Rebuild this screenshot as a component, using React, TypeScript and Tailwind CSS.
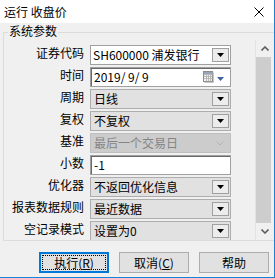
import React from "react";

function DropArrow() {
  return (
    <div className="absolute right-[1px] top-[2px] bottom-[2px] w-[17px] border border-[#a0a0a0] bg-[#ececec] flex items-center justify-center">
      <svg width="7" height="4" viewBox="0 0 7 4">
        <path d="M0 0H7L3.5 4Z" fill="#000" />
      </svg>
    </div>
  );
}

function Label({ children }: { children: React.ReactNode }) {
  return (
    <div className="h-[20px] text-right leading-[15px] whitespace-nowrap">{children}</div>
  );
}

function ReadCombo({ text }: { text: string }) {
  return (
    <div className="relative h-[20px] w-[141px] border border-[#adadad] bg-[#e1e1e1] flex items-center pl-[3px] leading-none whitespace-nowrap">
      {text}
      <DropArrow />
    </div>
  );
}

export default function App() {
  return (
    <div className="w-[275px] h-[278px] bg-[#f0f0f0] border-r border-b border-[#1883d7] flex flex-col font-['Noto_Sans_CJK_SC',sans-serif] text-[12px] text-black overflow-hidden">
      {/* title bar */}
      <div className="h-[23px] shrink-0 bg-white flex items-center justify-between pl-[4px] pr-[10px]">
        <span className="leading-none">运行 收盘价</span>
        <svg width="10" height="10" viewBox="0 0 10 10">
          <path d="M0.5 0.5L9.5 9.5M9.5 0.5L0.5 9.5" stroke="#000" strokeWidth="1" />
        </svg>
      </div>

      {/* group box */}
      <div className="relative mt-[9px] ml-[3px] h-[209px] shrink-0 border-t border-l border-b border-[#dcdcdc] pt-[7px] flex">
        <span className="absolute left-[4px] top-[-9px] bg-[#f0f0f0] px-[1px] leading-[14px]">系统参数</span>

        {/* scroll content */}
        <div className="flex-1 overflow-hidden pt-[5px]">
          <div className="grid grid-cols-[80px_141px] gap-x-[6px] gap-y-[2px]">
            <Label>证券代码</Label>
            <div className="relative h-[20px] w-[141px] border border-[#a0a0a0] bg-white flex items-center pl-[2px] leading-none whitespace-nowrap">
              SH600000 浦发银行
              <DropArrow />
            </div>

            <Label>时间</Label>
            <div className="relative h-[20px] w-[141px] border border-[#a0a0a0] shadow-[inset_1px_1px_0_#696969] bg-white flex items-center pl-[3px] leading-none whitespace-nowrap">
              2019/ 9/ 9
              <div className="absolute right-[6px] top-[3px] flex items-center gap-[3px]">
                <svg width="11" height="12" viewBox="0 0 11 12">
                  <rect x="0.5" y="0.5" width="9" height="10" fill="#f4f4f4" stroke="#8c8c8c" />
                  <path d="M1 3.5H9.5M1 5.5H9.5M1 7.5H9.5M3.5 3V10.5M5.5 3V10.5M7.5 3V10.5" stroke="#b8b8b8" strokeWidth="1" />
                  <rect x="1" y="1" width="8.5" height="2" fill="#9aa6b8" />
                  <path d="M10.5 1.5V11.5H1.5" stroke="#c8c8c8" fill="none" />
                </svg>
                <svg width="7" height="4" viewBox="0 0 7 4" className="mt-[4px]">
                  <path d="M0 0H7L3.5 4Z" fill="#3f63a3" />
                </svg>
              </div>
            </div>

            <Label>周期</Label>
            <ReadCombo text="日线" />

            <Label>复权</Label>
            <ReadCombo text="不复权" />

            <Label>基准</Label>
            <div className="relative h-[20px] w-[141px] border border-[#bfbfbf] bg-[#cccccc] flex items-center pl-[3px] leading-none whitespace-nowrap text-[#858585]">
              最后一个交易日
              <svg width="8" height="5" viewBox="0 0 8 5" className="absolute right-[6px] top-[7px]">
                <path d="M0.5 0.5L4 4L7.5 0.5" stroke="#b4b4b4" fill="none" strokeWidth="1" />
              </svg>
            </div>

            <Label>小数</Label>
            <div className="relative h-[20px] w-[141px] border border-[#a0a0a0] shadow-[inset_1px_1px_0_#696969] bg-white flex items-center pl-[3px] leading-none whitespace-nowrap">
              -1
            </div>

            <Label>优化器</Label>
            <ReadCombo text="不返回优化信息" />

            <Label>报表数据规则</Label>
            <ReadCombo text="最近数据" />

            <Label>空记录模式</Label>
            <ReadCombo text="设置为0" />
          </div>
        </div>

        {/* scrollbar */}
        <div className="w-[18px] mr-[1px] border-l border-[#e3e3e3] flex flex-col">
          <div className="h-[17px] flex items-center justify-center">
            <svg width="8" height="5" viewBox="0 0 8 5">
              <path d="M0.5 4.5L4 1L7.5 4.5" stroke="#606060" fill="none" strokeWidth="1.6" />
            </svg>
          </div>
          <div className="flex-1 w-[15px] bg-[#cdcdcd]"></div>
          <div className="h-[17px] flex items-center justify-center">
            <svg width="8" height="5" viewBox="0 0 8 5">
              <path d="M0.5 0.5L4 4L7.5 0.5" stroke="#606060" fill="none" strokeWidth="1.6" />
            </svg>
          </div>
        </div>
      </div>

      {/* buttons */}
      <div className="mt-[11px] flex justify-end gap-[10px] pr-[5px]">
        <div className="h-[21px] w-[70px] border-2 border-[#0078d7] bg-[#e1e1e1] p-[1px]">
          <div className="h-full w-full border border-dotted border-black flex items-center justify-center leading-none">
            执行(<span className="underline">R</span>)
          </div>
        </div>
        <div className="h-[21px] w-[70px] border border-[#adadad] bg-[#e1e1e1] flex items-center justify-center leading-none">
          取消(<span className="underline">C</span>)
        </div>
        <div className="h-[21px] w-[70px] border border-[#adadad] bg-[#e1e1e1] flex items-center justify-center leading-none">
          帮助
        </div>
      </div>
    </div>
  );
}
